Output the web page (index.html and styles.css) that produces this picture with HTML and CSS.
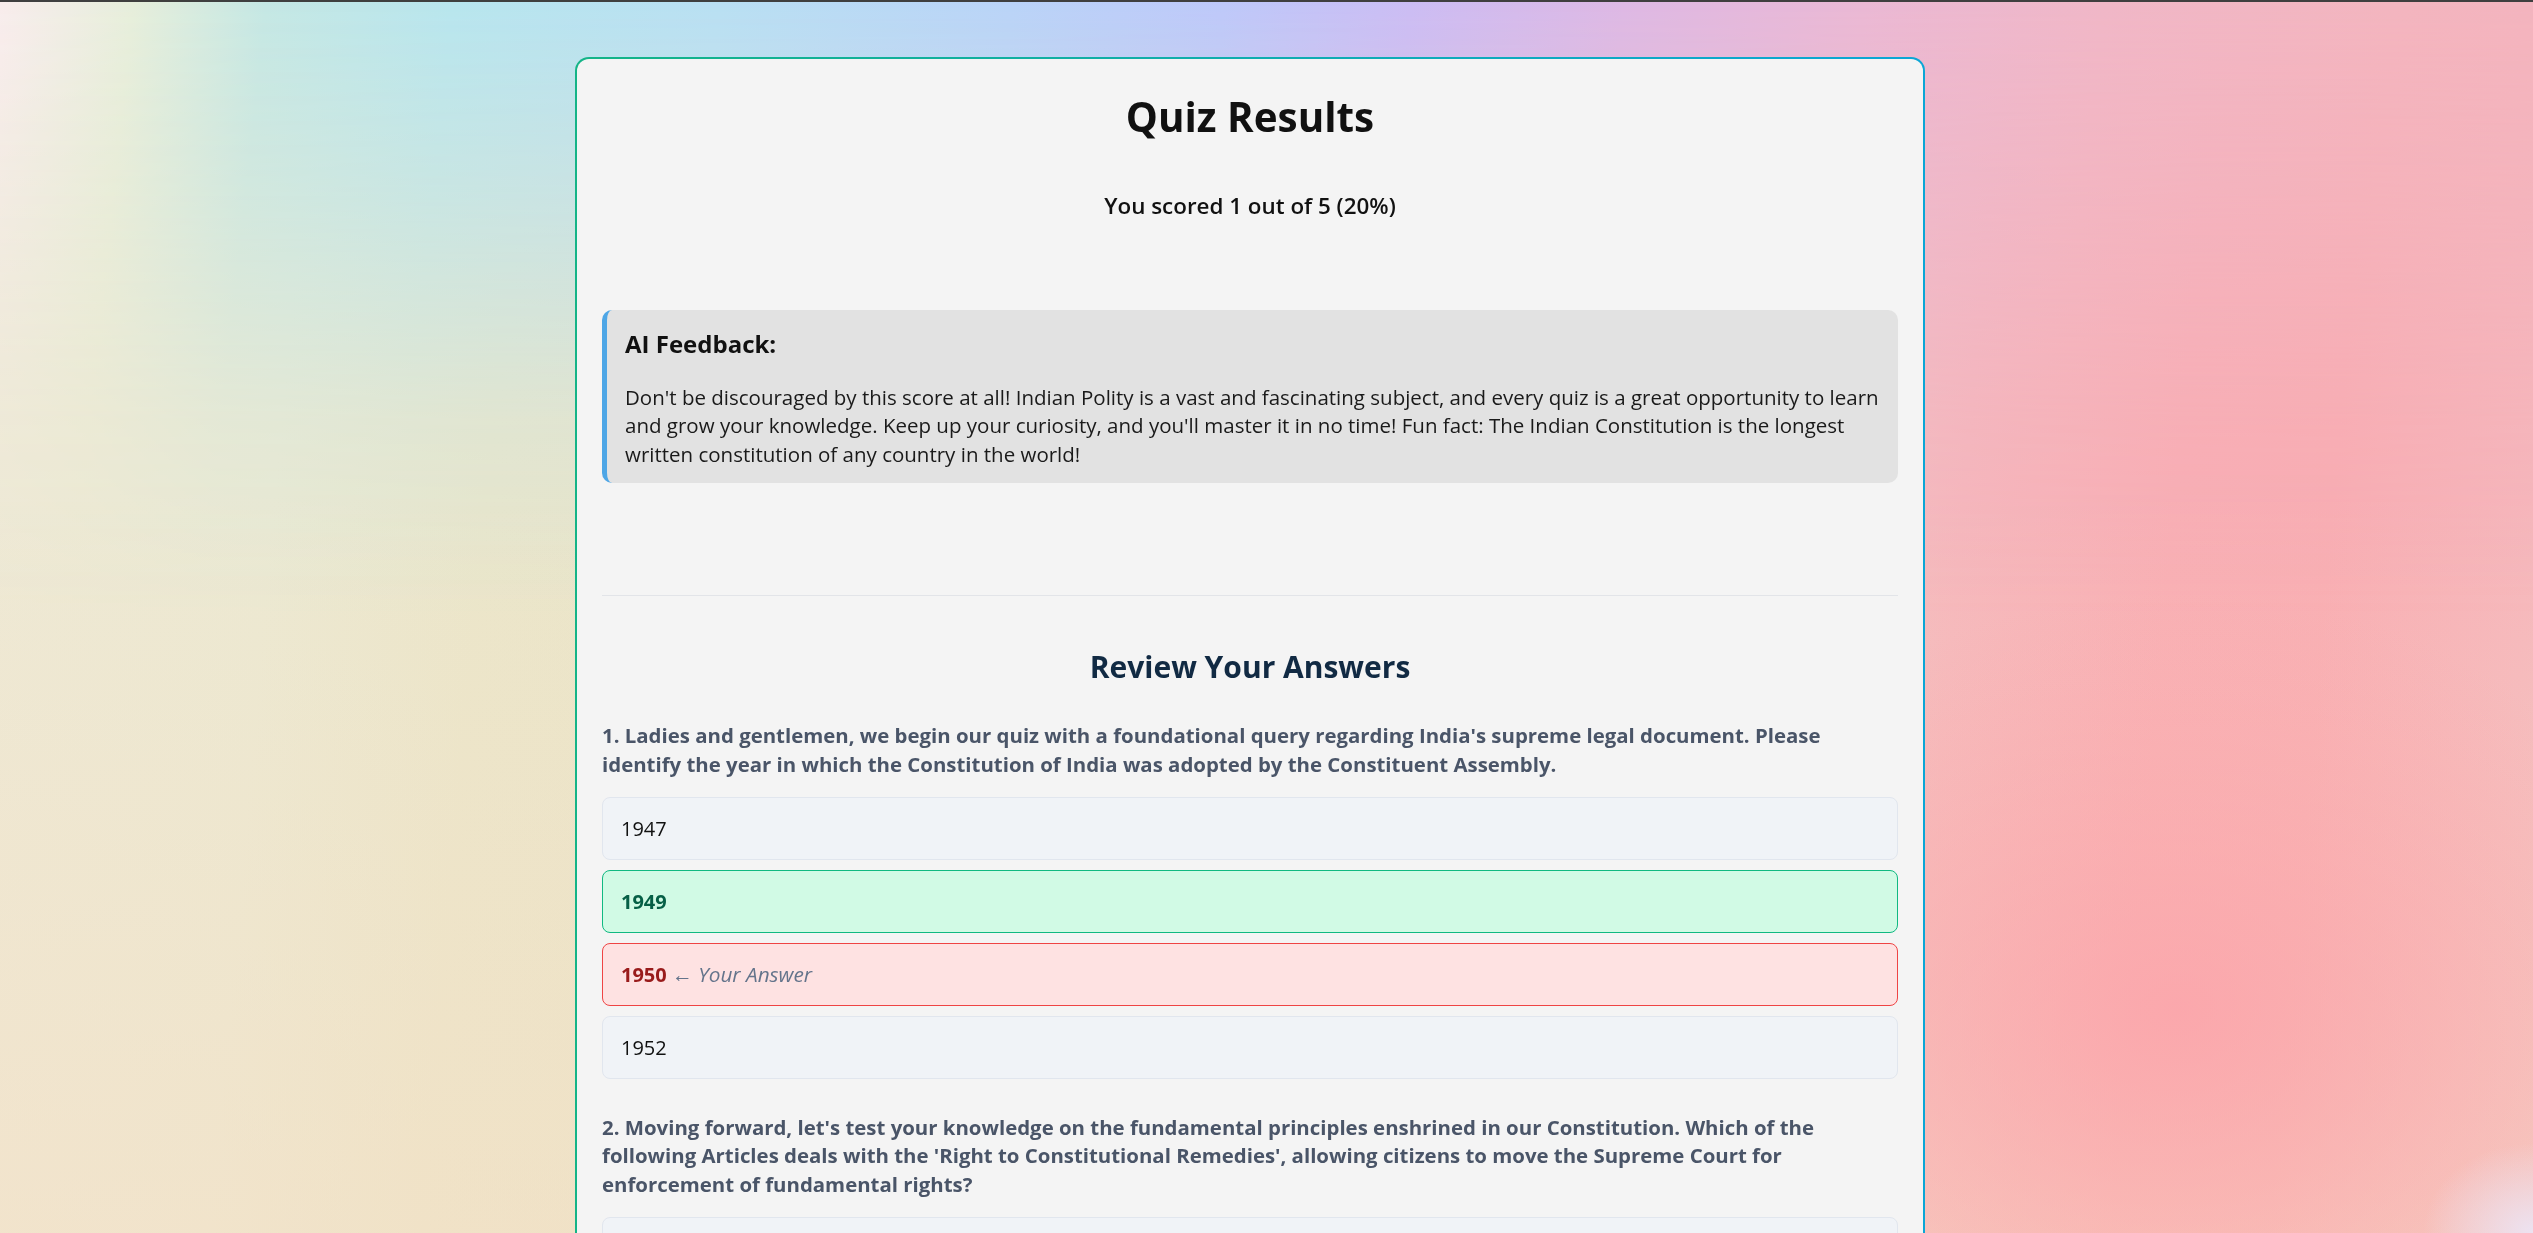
FILE: index.html
```html
<!DOCTYPE html>
<html lang="en">
<head>
<meta charset="utf-8">
<title>Quiz Results</title>
<link rel="stylesheet" href="styles.css">
</head>
<body>
<div class="bg" aria-hidden="true"></div>
<main class="page">
  <section class="card">
    <h1 class="title">Quiz Results</h1>
    <p class="score">You scored 1 out of 5 (20%)</p>

    <div class="feedback">
      <h3 class="feedback-title">AI Feedback:</h3>
      <p class="feedback-text">Don't be discouraged by this score at all! Indian Polity is a vast and fascinating subject, and every quiz is a great opportunity to learn and grow your knowledge. Keep up your curiosity, and you'll master it in no time! Fun fact: The Indian Constitution is the longest written constitution of any country in the world!</p>
    </div>

    <hr class="divider">

    <h2 class="review-title">Review Your Answers</h2>

    <div class="question">
      <p class="q-text">1. Ladies and gentlemen, we begin our quiz with a foundational query regarding India's supreme legal document. Please identify the year in which the Constitution of India was adopted by the Constituent Assembly.</p>
      <ul class="options">
        <li class="option">1947</li>
        <li class="option correct">1949</li>
        <li class="option wrong">1950 <span class="your">← Your Answer</span></li>
        <li class="option">1952</li>
      </ul>
    </div>

    <div class="question">
      <p class="q-text">2. Moving forward, let's test your knowledge on the fundamental principles enshrined in our Constitution. Which of the following Articles deals with the 'Right to Constitutional Remedies', allowing citizens to move the Supreme Court for enforcement of fundamental rights?</p>
      <ul class="options">
        <li class="option">Article 14</li>
        <li class="option">Article 19</li>
        <li class="option wrong">Article 21 <span class="your">← Your Answer</span></li>
        <li class="option correct">Article 32</li>
      </ul>
    </div>
  </section>
</main>
</body>
</html>
```
FILE: styles.css
```css
* { box-sizing: border-box; }

html, body { margin: 0; }

body {
  font-family: "Open Sans", "Noto Sans", sans-serif;
  color: #111;
  border-top: 2px solid #3f3f3f;
  min-height: 100vh;
}

.bg {
  position: fixed;
  inset: 0;
  z-index: -1;
  background:
    radial-gradient(ellipse 140px 120px at 0% 0%, rgba(250, 236, 238, 0.95), rgba(250, 236, 238, 0) 100%),
    radial-gradient(ellipse 110px 90px at 100% 100%, rgba(236, 228, 244, 0.95), rgba(236, 228, 244, 0) 100%),
    radial-gradient(ellipse 520px 420px at 86% 82%, rgba(252, 160, 168, 0.75), rgba(252, 160, 168, 0) 100%),
    linear-gradient(to bottom, rgba(255,255,255,0) 40%, rgba(246, 222, 196, 0.5) 100%),
    linear-gradient(95deg, #eee9d5 0%, #ece9d2 12%, #ebe6ca 20%, #e9e4c8 40%, #f0cbc8 65%, #f6b6bb 76%, #f9adb3 84%, #f9acb2 90%, #f5b9be 100%);
}

.bg::before {
  content: "";
  position: absolute;
  inset: 0;
  background: linear-gradient(96deg, #f8ecec 0%, #e6eedb 5%, #c4e7e4 10%, #b7e5ee 17%, #b8dff3 27%, #b9d3f8 38%, #bdc8fa 46%, #cbbcf4 53%, #ddb8e4 61%, #eab8d4 70%, #f0b7c7 79%, #f3b5bf 90%, #f3b3bd 100%);
  -webkit-mask-image: linear-gradient(to bottom, #000 0%, rgba(0,0,0,0.65) 16%, rgba(0,0,0,0.2) 34%, rgba(0,0,0,0) 50%);
  mask-image: linear-gradient(to bottom, #000 0%, rgba(0,0,0,0.65) 16%, rgba(0,0,0,0.2) 34%, rgba(0,0,0,0) 50%);
}

.page {
  display: flex;
  justify-content: center;
  padding: 55px 33px 40px 0;
}

.card {
  width: 1350px;
  border: 2px solid transparent;
  border-radius: 14px;
  background:
    linear-gradient(#f4f4f4, #f4f4f4) padding-box,
    linear-gradient(90deg, #14b487, #0ba6d6) border-box;
  padding: 29px 25px 40px;
}

.title {
  margin: 0;
  font-size: 40.4px;
  line-height: 58px;
  font-weight: 700;
  text-align: center;
  color: #111;
}

.score {
  margin: 43px 0 0;
  font-size: 22.4px;
  line-height: 34px;
  font-weight: 600;
  text-align: center;
  color: #111;
}

.feedback {
  margin-top: 87px;
  background: #e2e2e2;
  border-left: 5px solid #4ea6e6;
  border-radius: 10px;
  padding: 20px 8px 15px 18px;
}

.feedback-title {
  margin: 0 0 25px;
  font-size: 24px;
  line-height: 28px;
  font-weight: 700;
  color: #111;
}

.feedback-text {
  margin: 0;
  font-size: 20.5px;
  line-height: 28.4px;
  color: #1a1a1a;
}

.divider {
  margin: 112px 0 0;
  border: 0;
  border-top: 1px solid #e2e4e8;
  height: 0;
}

.review-title {
  margin: 53px 0 0;
  font-size: 30px;
  line-height: 36px;
  font-weight: 700;
  text-align: center;
  color: #112a43;
}

.question { margin-top: 34px; }
.review-title + .question { margin-top: 36px; }

.q-text {
  margin: 0;
  padding-right: 10px;
  font-size: 20.4px;
  line-height: 28.4px;
  font-weight: 700;
  color: #4a5568;
}

.options {
  list-style: none;
  margin: 19px 0 0;
  padding: 0;
}

.option {
  border: 1px solid #e1e6ee;
  background: #f0f3f7;
  border-radius: 8px;
  padding: 16px 18px;
  font-size: 20px;
  line-height: 29px;
  color: #111;
  margin-bottom: 10px;
}

.option:last-child { margin-bottom: 0; }

.option.correct {
  background: #d1fae5;
  border-color: #10b981;
  color: #065f46;
  font-weight: 700;
}

.option.wrong {
  background: #fee2e2;
  border-color: #ef4444;
  color: #991b1b;
  font-weight: 700;
}

.your {
  font-weight: 400;
  font-style: italic;
  font-size: 1.04em;
  color: #64748b;
}
```
